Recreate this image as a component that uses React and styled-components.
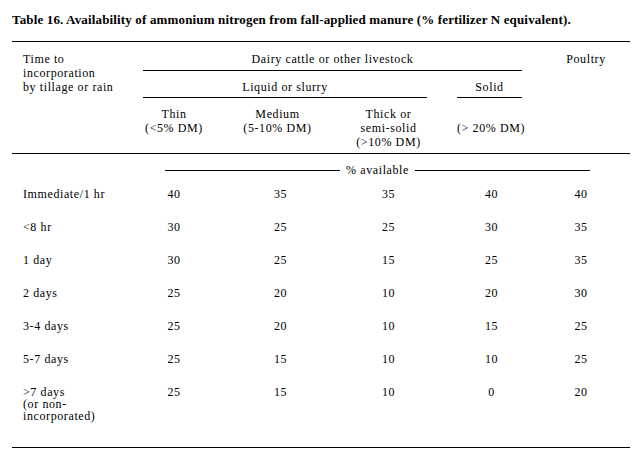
import React from "react";
import styled, { createGlobalStyle } from "styled-components";

const GlobalStyle = createGlobalStyle`
  html, body {
    margin: 0;
    padding: 0;
    background: #fff;
  }
  body {
    font-family: "Liberation Serif", "Times New Roman", serif;
    color: #000;
  }
`;

const Page = styled.div`
  width: 642px;
  height: 460px;
  padding: 0 12px;
  box-sizing: border-box;
  overflow: hidden;
  font-family: "Liberation Serif", "Times New Roman", serif;
`;

const Title = styled.h1`
  margin: 0;
  padding-top: 12px;
  height: 29px;
  font-size: 13px;
  line-height: 16px;
  font-weight: bold;
  letter-spacing: 0.15px;
  white-space: nowrap;
`;

const Rule = styled.div`
  height: 1px;
  background: #000;
  margin-top: ${(p) => p.$top || 0}px;
`;

const cols = "131px 62px 145px 77px 30px 65px 108px";

const Header = styled.div`
  display: grid;
  grid-template-columns: ${cols};
  font-size: 12px;
  line-height: 14px;
  letter-spacing: 0.6px;
`;

const HeadCell = styled.div`
  grid-column: ${(p) => p.$col};
  grid-row: ${(p) => p.$row};
  text-align: ${(p) => (p.$left ? "left" : "center")};
  padding: ${(p) => p.$pad || "0"};
  border-bottom: ${(p) => (p.$rule ? "1px solid #000" : "none")};
  white-space: nowrap;
`;

const Available = styled.div`
  display: flex;
  align-items: center;
  gap: 6px;
  width: 425px;
  margin: 9px 0 0 153px;
  font-size: 12px;
  line-height: 14px;
  letter-spacing: 0.6px;
  &::before,
  &::after {
    content: "";
    flex: 1;
    height: 1px;
    background: #000;
  }
`;

const Body = styled.div`
  font-size: 12px;
  line-height: 12px;
  letter-spacing: 0.6px;
`;

const Row = styled.div`
  display: grid;
  grid-template-columns: ${cols};
  padding: 11px 0 10px;
`;

const Label = styled.div`
  padding-left: 11px;
  white-space: nowrap;
`;

const Value = styled.div`
  grid-column: ${(p) => p.$col};
  text-align: center;
  padding-left: ${(p) => p.$shift || 0}px;
`;

const rows = [
  ["Immediate/1 hr", 40, 35, 35, 40, 40],
  ["<8 hr", 30, 25, 25, 30, 35],
  ["1 day", 30, 25, 15, 25, 35],
  ["2 days", 25, 20, 10, 20, 30],
  ["3-4 days", 25, 20, 10, 15, 25],
  ["5-7 days", 25, 15, 10, 10, 25],
  [[">7 days", "(or non-", "incorporated)"], 25, 15, 10, 0, 20],
];

const valueCols = [2, 3, 4, 6, 7];
const valueShift = [0, 6, 0, 4, 10];

export default function App() {
  return (
    <Page>
      <GlobalStyle />
      <Title>
        Table 16. Availability of ammonium nitrogen from fall-applied manure (% fertilizer N equivalent).
      </Title>
      <Rule />
      <Header>
        <HeadCell $col="1" $row="1 / 4" $left $pad="10px 0 0 11px">
          Time to
          <br />
          incorporation
          <br />
          by tillage or rain
        </HeadCell>
        <HeadCell $col="2 / 7" $row="1" $pad="10px 0 4px" $rule>
          Dairy cattle or other livestock
        </HeadCell>
        <HeadCell $col="7" $row="1 / 4" $pad="10px 0 0 20px">
          Poultry
        </HeadCell>
        <HeadCell $col="2 / 5" $row="2" $pad="9px 0 3px" $rule>
          Liquid or slurry
        </HeadCell>
        <HeadCell $col="6" $row="2" $pad="9px 0 3px" $rule>
          Solid
        </HeadCell>
        <HeadCell $col="2" $row="3" $pad="9px 0 0">
          Thin
          <br />
          (&lt;5% DM)
        </HeadCell>
        <HeadCell $col="3" $row="3" $pad="9px 0 0">
          Medium
          <br />
          (5-10% DM)
        </HeadCell>
        <HeadCell $col="4" $row="3" $pad="9px 0 4px">
          Thick or
          <br />
          semi-solid
          <br />
          (&gt;10% DM)
        </HeadCell>
        <HeadCell $col="6" $row="3" $pad="23px 0 0">
          (&gt; 20% DM)
        </HeadCell>
      </Header>
      <Rule />
      <Available>% available</Available>
      <Body>
        {rows.map(([label, ...vals], i) => (
          <Row key={i}>
            <Label>
              {Array.isArray(label)
                ? label.map((l, j) => (
                    <React.Fragment key={j}>
                      {j > 0 && <br />}
                      {l}
                    </React.Fragment>
                  ))
                : label}
            </Label>
            {vals.map((v, j) => (
              <Value key={j} $col={valueCols[j]} $shift={valueShift[j]}>
                {v}
              </Value>
            ))}
          </Row>
        ))}
      </Body>
      <Rule $top={15} />
    </Page>
  );
}
